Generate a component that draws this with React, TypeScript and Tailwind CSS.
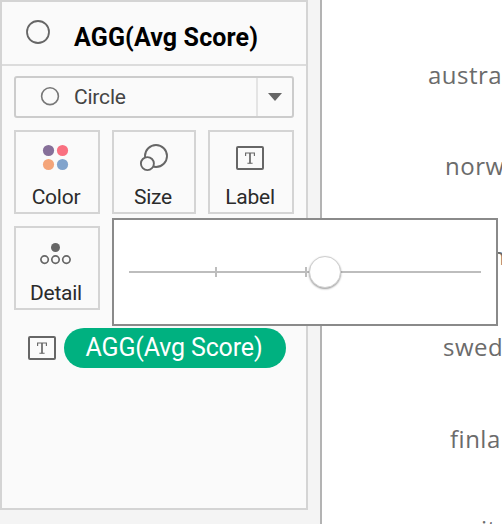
import type { ReactNode } from 'react';

const circleStroke = '#666666';

function Label({ children }: { children: ReactNode }) {
  return <span className="block whitespace-nowrap pr-[2px] text-[21px] leading-6 tracking-[-0.25px] text-[#2b2b2b]">{children}</span>;
}

function TextIcon() {
  return (
    <svg width="28" height="24" viewBox="0 0 28 24" fill="none" stroke={circleStroke} strokeWidth="2">
      <rect x="1" y="1" width="26" height="22" rx="1" />
      <path d="M9.6 10V7h8.8v3M11.4 17.2h5.2" strokeWidth="1.1" />
      <path d="M14 7v10.2" strokeWidth="1.7" />
    </svg>
  );
}

function Card({ icon, label }: { icon: ReactNode; label: string }) {
  return (
    <button className="flex h-[84px] flex-col items-center border-2 border-[#d4d4d4] bg-[#fafafa]">
      <span className="mb-[2px] flex h-[51px] w-full items-center justify-center pr-[2px]">{icon}</span>
      <Label>{label}</Label>
    </button>
  );
}

function ColorIcon() {
  return (
    <svg width="26" height="26" viewBox="0 0 26 26" className="overflow-visible">
      <circle cx="5.5" cy="5.5" r="5.6" fill="#866f99" />
      <circle cx="19.5" cy="5.5" r="5.6" fill="#f97080" />
      <circle cx="5.5" cy="19.5" r="5.6" fill="#f4a57a" />
      <circle cx="19.5" cy="19.5" r="5.6" fill="#81a3cc" />
    </svg>
  );
}

function SizeIcon() {
  return (
    <svg width="28" height="28" viewBox="0 0 28 28" fill="#fafafa" stroke={circleStroke} strokeWidth="1.9" className="overflow-visible">
      <circle cx="17" cy="12" r="11" />
      <circle cx="8.4" cy="19.6" r="6.5" />
    </svg>
  );
}

function DetailIcon() {
  return (
    <svg width="32" height="22" viewBox="0 0 32 22" fill="none" stroke={circleStroke} strokeWidth="1.7">
      <circle cx="15.5" cy="4.5" r="4.5" fill={circleStroke} stroke="none" />
      <circle cx="4.6" cy="16.6" r="3.7" />
      <circle cx="15.5" cy="16.6" r="3.7" />
      <circle cx="26.4" cy="16.6" r="3.7" />
    </svg>
  );
}

const rows = [
  { name: 'austra', indent: 'pl-[106px]' },
  { name: 'norw', indent: 'pl-[123px] pb-px' },
  { name: 'japan', indent: 'pl-[119px] pb-px' },
  { name: 'swed', indent: 'pl-[121px]' },
  { name: 'finla', indent: 'pl-[128px] pt-[2px]' },
  { name: 'switz', indent: 'pl-[128px]' },
];

export default function App() {
  return (
    <div className="relative flex h-[524px] w-[502px] overflow-hidden bg-white font-['Roboto',sans-serif]">
      <aside className="w-[322px] shrink-0 border-r-2 border-[#b3b3b3] bg-[#f4f4f4]">
        <section className="h-[510px] w-[308px] border-2 border-[#d4d4d4] bg-[#fafafa]">
          <header className="flex h-16 items-start border-b-2 border-[#dcdcdc] pl-6 pt-[18px]">
            <svg width="24" height="24" viewBox="0 0 24 24" fill="none" stroke={circleStroke} strokeWidth="1.8">
              <circle cx="12" cy="12" r="11" />
            </svg>
            <h1 className="ml-6 mt-[2px] whitespace-nowrap text-[25px] font-bold leading-8 tracking-[0.13px] text-black">AGG(Avg Score)</h1>
          </header>
          <div className="px-3 pt-[10px]">
            <div className="flex h-[42px] items-center rounded-[3px] border-2 border-[#cccccc]">
              <svg className="ml-6" width="20" height="20" viewBox="0 0 20 20" fill="none" stroke="#777" strokeWidth="1.6">
                <circle cx="10" cy="9.2" r="8.4" />
              </svg>
              <span className="ml-[14px] grow whitespace-nowrap text-[21px] leading-6 tracking-[-0.2px] text-[#444]">Circle</span>
              <span className="flex h-full w-9 items-center justify-center border-l-2 border-[#e4e4e4]">
                <svg width="14" height="8" viewBox="0 0 14 8"><path d="M0 0h14L7 8z" fill="#666" /></svg>
              </span>
            </div>
            <div className="mt-3 grid grid-cols-[86px_84px_86px] gap-3">
              <Card icon={<ColorIcon />} label="Color" />
              <Card icon={<SizeIcon />} label="Size" />
              <Card icon={<TextIcon />} label="Label" />
              <Card icon={<DetailIcon />} label="Detail" />
            </div>
            <div className="mt-[18px] flex items-center pl-[14px]">
              <TextIcon />
              <div className="ml-2 flex h-10 w-[222px] items-center justify-center rounded-full bg-[#00b180] pr-[2px]">
                <span className="whitespace-nowrap text-[25px] leading-8 tracking-[-0.15px] text-white">AGG(Avg Score)</span>
              </div>
            </div>
          </div>
        </section>
      </aside>
      <main className="w-[180px] overflow-hidden pt-[30px] font-['Open_Sans',sans-serif] text-[24px] text-[#6b6b6b]">
        {rows.map(({ name, indent }) => (
          <div key={name} className={'flex h-[90.7px] items-center whitespace-nowrap tracking-[0.5px] ' + indent}>{name}</div>
        ))}
      </main>
      <div className="absolute left-[112px] top-[218px] flex h-[108px] w-[386px] items-center border-2 border-[#8a8a8a] bg-white pl-[15px]">
        <div className="relative h-[2px] w-[352px] bg-[#bdbdbd]">
          <i className="absolute -top-1 left-[86px] h-[10px] w-[2px] bg-[#bdbdbd]" />
          <i className="absolute -top-1 left-[176px] h-[10px] w-[2px] bg-[#bdbdbd]" />
          <i className="absolute -top-[15px] left-[180px] size-8 rounded-full border border-[#cfcfcf] bg-white shadow-[0_1px_2px_rgba(0,0,0,0.4)]" />
        </div>
      </div>
    </div>
  );
}
